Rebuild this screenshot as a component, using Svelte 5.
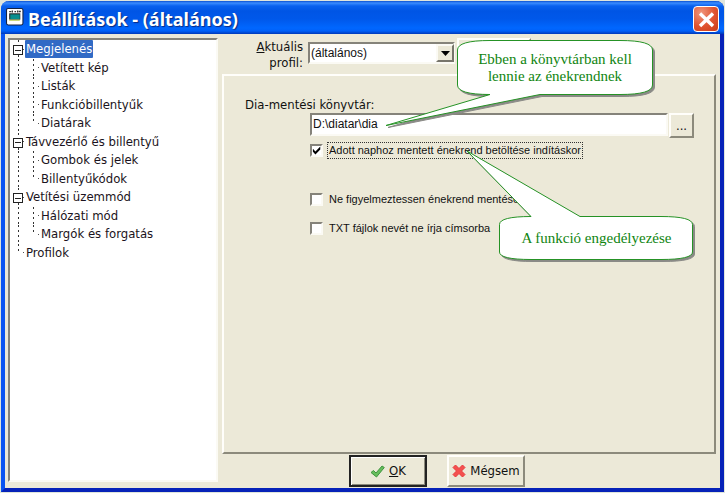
<script>
  const tree = [
    { text: 'Megjelenés', level: 0, node: true, selected: true },
    { text: 'Vetített kép', level: 1 },
    { text: 'Listák', level: 1 },
    { text: 'Funkcióbillentyűk', level: 1 },
    { text: 'Diatárak', level: 1, last: true },
    { text: 'Távvezérlő és billentyű', level: 0, node: true },
    { text: 'Gombok és jelek', level: 1 },
    { text: 'Billentyűkódok', level: 1, last: true },
    { text: 'Vetítési üzemmód', level: 0, node: true },
    { text: 'Hálózati mód', level: 1 },
    { text: 'Margók és forgatás', level: 1, last: true },
    { text: 'Profilok', level: 0, last: true }
  ];
  let folder = $state('D:\\diatar\\dia');
  let loadDaily = $state(true);
  let noWarning = $state(false);
  let noTitle = $state(false);
</script>

<div class="window">
  <header>
    <svg class="appicon" width="18" height="18" viewBox="0 0 17 17" aria-hidden="true">
      <rect x="0.5" y="0.500" width="15.5" height="15.5" rx="1.5" fill="#fff" stroke="#16233f" />
      <path d="M3 3.500h2M6 2.300v2M8 3.500h1.500M11 2.300v2M12 3.300h2" stroke="#333" stroke-width="1.2" />
      <rect x="3" y="5" width="10.5" height="6" fill="#222" />
      <rect x="4" y="6" width="9" height="4.5" fill="#0a8e8e" />
      <path d="M3 11.500h10" stroke="#b9c840" />
    </svg>
    <h1>Beállítások - (általános)</h1>
    <button class="close" aria-label="Bezárás">
      <svg width="25" height="25" viewBox="0 0 25 25" aria-hidden="true">
        <path d="M6 6.5 19 19M19 6.5 6 19" stroke="#fff" stroke-width="3.4" />
      </svg>
    </button>
  </header>

  <div class="body">
    <nav class="sunken">
      <ul>
        {#each tree as item}
          <li class:child={item.level === 1}>
            <span class="rail root" class:end={item.level === 0 && item.last}>
              {#if item.node}<i class="box"></i>{/if}
            </span>
            {#if item.level === 1}
              <span class="rail sub" class:end={item.last}></span>
            {/if}
            <a href="#page" class:selected={item.selected}>{item.text}</a>
          </li>
        {/each}
      </ul>
    </nav>

    <main>
      <div class="profile">
        <label for="profile"><u>A</u>ktuális<br />profil:</label>
        <span class="combo">
          <select id="profile"><option>(általános)</option></select>
          <span class="arrow"><svg width="9" height="5" viewBox="0 0 9 5"><path d="M0 0h9L4.500 5z" /></svg></span>
        </span>
        <button class="raised manage" aria-label="Profilok"></button>
      </div>

      <section>
        <label class="caption" for="folder">Dia-mentési könyvtár:</label>
        <div class="folder">
          <input id="folder" type="text" bind:value={folder} />
          <button class="raised browse" aria-label="Tallózás">...</button>
        </div>
        <label class="check first">
          <input type="checkbox" bind:checked={loadDaily} />
          <span class="focus">Adott naphoz mentett énekrend betöltése indításkor</span>
        </label>
        <label class="check">
          <input type="checkbox" bind:checked={noWarning} />
          <span>Ne figyelmeztessen énekrend mentésekor</span>
        </label>
        <label class="check">
          <input type="checkbox" bind:checked={noTitle} />
          <span>TXT fájlok nevét ne írja címsorba</span>
        </label>
      </section>

      <footer>
        <button class="raised default">
          <svg width="15" height="13" viewBox="0 0 15 13" aria-hidden="true">
            <path d="M1 7.500 3.500 5.500 6 8 12 1 14.300 2.500 6.500 12z" fill="#67bd5d" stroke="#3f9540" stroke-linejoin="round" />
          </svg>
          <span><u>O</u>K</span>
        </button>
        <button class="raised">
          <svg width="14" height="14" viewBox="0 0 14 14" aria-hidden="true">
            <path d="M1 3.500 3.500 1 7 4.500 10.500 1 13 3.500 9.500 7 13 10.500 10.500 13 7 9.500 3.500 13 1 10.500 4.500 7z" fill="#f4504f" stroke="#e8393b" stroke-linejoin="round" />
          </svg>
          <span>Mégsem</span>
        </button>
      </footer>
    </main>
  </div>

  <div class="callout one">
    <svg width="272" height="92" viewBox="0 0 272 92" aria-hidden="true">
      <path d="M105 2.500H235Q267.500 2.500 267.500 12V47Q267.500 56.500 235 56.500H155L1 87.500 105 56.500Q72.500 56.500 72.500 47V12Q72.500 2.500 105 2.500Z" />
    </svg>
    <p>Ebben a könyvtárban kell<br />lennie az énekrendnek</p>
  </div>
  <div class="callout two">
    <svg width="232" height="114" viewBox="0 0 232 114" aria-hidden="true">
      <path d="M65 66.500 1 1 114 66.500H195Q226.500 66.500 226.500 74.500V102Q226.500 109.500 195 109.500H65Q33.500 109.500 33.500 102V74.500Q33.500 66.500 65 66.500Z" />
    </svg>
    <p>A funkció engedélyezése</p>
  </div>
</div>

<style>
  :global(body) { margin: 0; background: #dfe5dc; }
  * { box-sizing: border-box; }
  .window {
    position: relative;
    display: flex;
    flex-direction: column;
    min-height: 491px;
    margin: 1px;
    border: solid;
    border-width: 0 4px 4px;
    border-color: #0a3fe0 #0622b8 #0622b8 #0b55f2;
    border-radius: 8px 8px 0 0;
    background: #ece9d8;
    font: 13px/16px "DejaVu Sans Condensed", "Noto Sans", sans-serif;
    color: #111;
  }
  header {
    display: flex;
    align-items: center;
    gap: 4px;
    height: 33px;
    margin: 0 -4px;
    padding: 2px 5px 0;
    border-radius: 8px 8px 0 0;
    background: linear-gradient(#0a50d0, #3a8cff 2px, #0861ee 5px, #0055e5 10px, #0058ea 18px, #0067ff 27px, #0060f8 30px, #0038b8);
  }
  .appicon { margin-bottom: 4px; }
  h1 {
    flex: 1;
    margin: 0;
    font: bold 18px/24px "Noto Sans", sans-serif;
    color: #fff;
    text-shadow: 1px 1px 1px #0a2a80;
  }
  button { padding: 0; font: inherit; color: inherit; }
  .close {
    display: grid;
    place-items: center;
    width: 26px;
    height: 26px;
    border: 1px solid #fff;
    border-radius: 4px;
    background: radial-gradient(circle at 30% 25%, #f0967c, #e0532f 55%, #c93c18);
  }
  .close svg { display: block; }
  .body { flex: 1; display: flex; gap: 4px; padding: 4px 4px 0 3px; }
  nav {
    width: 210px;
    margin-bottom: 6px;
    border: 2px solid;
    border-color: #85837a #fbfaf4 #fbfaf4 #85837a;
    background: #fff;
  }
  ul {
    display: grid;
    grid-auto-rows: 1fr;
    height: 222px;
    margin: 0;
    padding: 0;
    list-style: none;
  }
  li { display: flex; align-items: center; padding-left: 8px; }
  .rail {
    position: relative;
    flex: none;
    align-self: stretch;
    width: 7px;
    background:
      repeating-linear-gradient(#333 0 2px, transparent 2px 5px) 0 0 / 1px 100% no-repeat,
      linear-gradient(#555, #555) 5px 50% / 1px 1px no-repeat;
  }
  .child .root { width: 15px; background-size: 1px 100%, 0 0; }
  .rail.end { background-size: 1px 55%, 1px 1px; }
  .box {
    position: absolute;
    left: -5px;
    top: 5px;
    width: 10px;
    height: 10px;
    border: 1px solid #222;
    background: linear-gradient(#222, #222) 50% 50% / 6px 1px no-repeat #fff;
  }
  li a {
    padding: 0 1px;
    line-height: 18px;
    color: #1b1320;
    text-decoration: none;
    white-space: nowrap;
  }
  li a.selected { background: #316ac5; color: #fff; border-radius: 1px; }
  main { flex: 1; display: flex; flex-direction: column; min-width: 0; }
  .profile { display: flex; height: 36px; gap: 5px; }
  .profile label { width: 81px; text-align: right; padding-top: 1px; }
  .combo { position: relative; width: 147px; height: 22px; margin-top: 4px; }
  .manage { width: 74px; height: 30px; margin-left: -3px; }
  select {
    width: 100%;
    height: 100%;
    padding: 0 1px;
    appearance: none;
    border: 2px solid;
    border-color: #85837a #fbfaf4 #fbfaf4 #85837a;
    border-radius: 0;
    background: #fff;
    font: 12px "Liberation Sans", sans-serif;
    color: #111;
  }
  .arrow {
    position: absolute;
    right: 1px;
    top: 2px;
    display: grid;
    place-items: center;
    width: 18px;
    height: 18px;
    border: 2px solid;
    border-color: #fbfaf4 #77756b #77756b #fbfaf4;
    background: #ece9d8;
    pointer-events: none;
  }
  section {
    height: 380px;
    padding: 21px 20px 0 21px;
    border: 2px solid;
    border-color: #fffefa #8c8a7c #8c8a7c #fffefa;
  }
  .caption { display: block; }
  .folder { display: flex; gap: 1px; padding-left: 65px; }
  .folder input {
    flex: 1;
    min-width: 0;
    height: 23px;
    padding: 0 1px 2px;
    border: 2px solid;
    border-color: #85837a #fbfaf4 #fbfaf4 #85837a;
    background: #fff;
    font: 12px "Liberation Sans", sans-serif;
    color: #111;
    outline: none;
  }
  .raised {
    border: 2px solid;
    border-color: #fffefa #8c8a7c #8c8a7c #fffefa;
    background: #ece9d8;
  }
  .browse { width: 25px; height: 25px; }
  .check {
    display: flex;
    align-items: center;
    gap: 4px;
    height: 17px;
    margin: 0 0 12px 65px;
    font: 11px/15px "Liberation Sans", sans-serif;
    white-space: nowrap;
  }
  .check.first { margin: 4px 0 32px 65px; }
  .check span { padding: 0 1px; border: 1px solid transparent; }
  .check .focus { border: 1px dotted #333; }
  .check input {
    appearance: none;
    width: 13px;
    height: 13px;
    margin: 0;
    border: 2px solid;
    border-color: #85837a #fbfaf4 #fbfaf4 #85837a;
    background: #fff;
  }
  .check input:checked::after {
    content: '';
    display: block;
    width: 9px;
    height: 9px;
    background: #000;
    clip-path: polygon(10% 30%, 38% 60%, 92% 5%, 92% 38%, 38% 95%, 10% 65%);
  }
  footer { display: flex; gap: 20px; padding: 1px 0 0 127px; }
  footer button {
    display: flex;
    align-items: center;
    justify-content: center;
    gap: 4px;
    width: 78px;
    height: 32px;
  }
  footer .default { border-color: #222; box-shadow: inset 1px 1px #fff, inset -1px -1px #8c8a7c; }
  .callout { position: absolute; pointer-events: none; }
  .callout svg { display: block; overflow: visible; filter: drop-shadow(2px 2px 0 #8a8a86); }
  .callout path { fill: #fff; stroke: #259225; stroke-width: 1; }
  .callout p {
    position: absolute;
    margin: 0;
    text-align: center;
    white-space: nowrap;
    font: 15px/17px "Liberation Serif", serif;
    color: #108510;
  }
  .one { left: 380px; top: 37px; }
  .one p { left: 73px; right: 5px; top: 13px; }
  .two { left: 461px; top: 149px; }
  .two p { left: 34px; right: 5px; top: 80px; }
</style>
